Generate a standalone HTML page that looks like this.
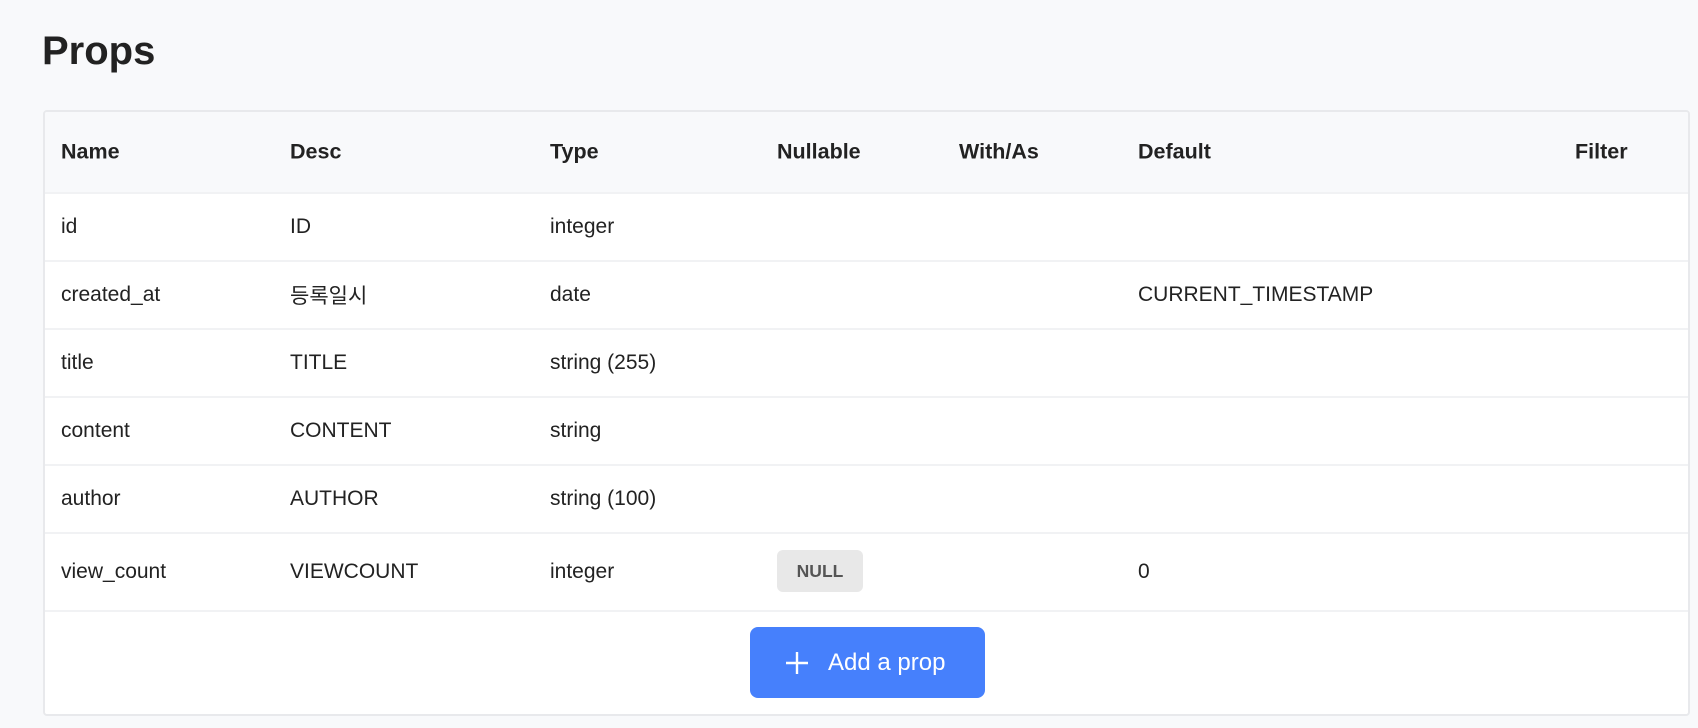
<!DOCTYPE html>
<html><head><meta charset="utf-8"><style>
*{margin:0;padding:0;box-sizing:border-box}
body{width:1698px;height:728px;background:#f8f9fb;font-family:"Liberation Sans","Noto Sans CJK KR",sans-serif;color:#222;position:relative;overflow:hidden}
h1{position:absolute;left:42px;top:29px;font-size:40px;font-weight:bold;color:#222}
.tbl{position:absolute;left:43px;top:110px;width:1647px;height:606px;background:#fff;border:2px solid #e8e9ec;border-radius:4px;overflow:hidden}
.row{position:absolute;left:0;right:0;border-bottom:2px solid #f1f2f4}
.row span{position:absolute;top:50%;transform:translateY(-50%);font-size:21px;white-space:nowrap}
.hd{background:#f8f9fb;font-weight:600}
.hd span{font-size:21.5px}
.null{position:absolute;background:#e8e8e8;color:#555;font-weight:bold;font-size:17.5px;border-radius:6px;width:86px;height:42px;line-height:42px;text-align:center}
.btn{position:absolute;left:705px;top:515px;width:235px;height:71px;background:#4680fc;border-radius:8px;color:#fff;font-size:24px}
</style></head><body>
<h1>Props</h1>
<div class="tbl">
<div class="row hd" style="top:0;height:82px"><span style="left:16px">Name</span><span style="left:245px">Desc</span><span style="left:505px">Type</span><span style="left:732px">Nullable</span><span style="left:914px">With/As</span><span style="left:1093px">Default</span><span style="left:1530px">Filter</span></div>
<div class="row" style="top:82px;height:68px"><span style="left:16px">id</span><span style="left:245px">ID</span><span style="left:505px">integer</span></div>
<div class="row" style="top:150px;height:68px"><span style="left:16px">created_at</span><span style="left:245px">등록일시</span><span style="left:505px">date</span><span style="left:1093px">CURRENT_TIMESTAMP</span></div>
<div class="row" style="top:218px;height:68px"><span style="left:16px">title</span><span style="left:245px">TITLE</span><span style="left:505px">string (255)</span></div>
<div class="row" style="top:286px;height:68px"><span style="left:16px">content</span><span style="left:245px">CONTENT</span><span style="left:505px">string</span></div>
<div class="row" style="top:354px;height:68px"><span style="left:16px">author</span><span style="left:245px">AUTHOR</span><span style="left:505px">string (100)</span></div>
<div class="row" style="top:422px;height:78px"><span style="left:16px">view_count</span><span style="left:245px">VIEWCOUNT</span><span style="left:505px">integer</span><span style="left:1093px">0</span></div>
<div class="null" style="left:732px;top:438px">NULL</div>
<div class="btn"><svg style="position:absolute;left:35px;top:24px" width="24" height="24" viewBox="0 0 24 24"><path d="M12 1V23M1 12H23" stroke="#fff" stroke-width="2.4"/></svg><span style="position:absolute;left:78px;top:22px">Add a prop</span></div>
</div>
</body></html>
